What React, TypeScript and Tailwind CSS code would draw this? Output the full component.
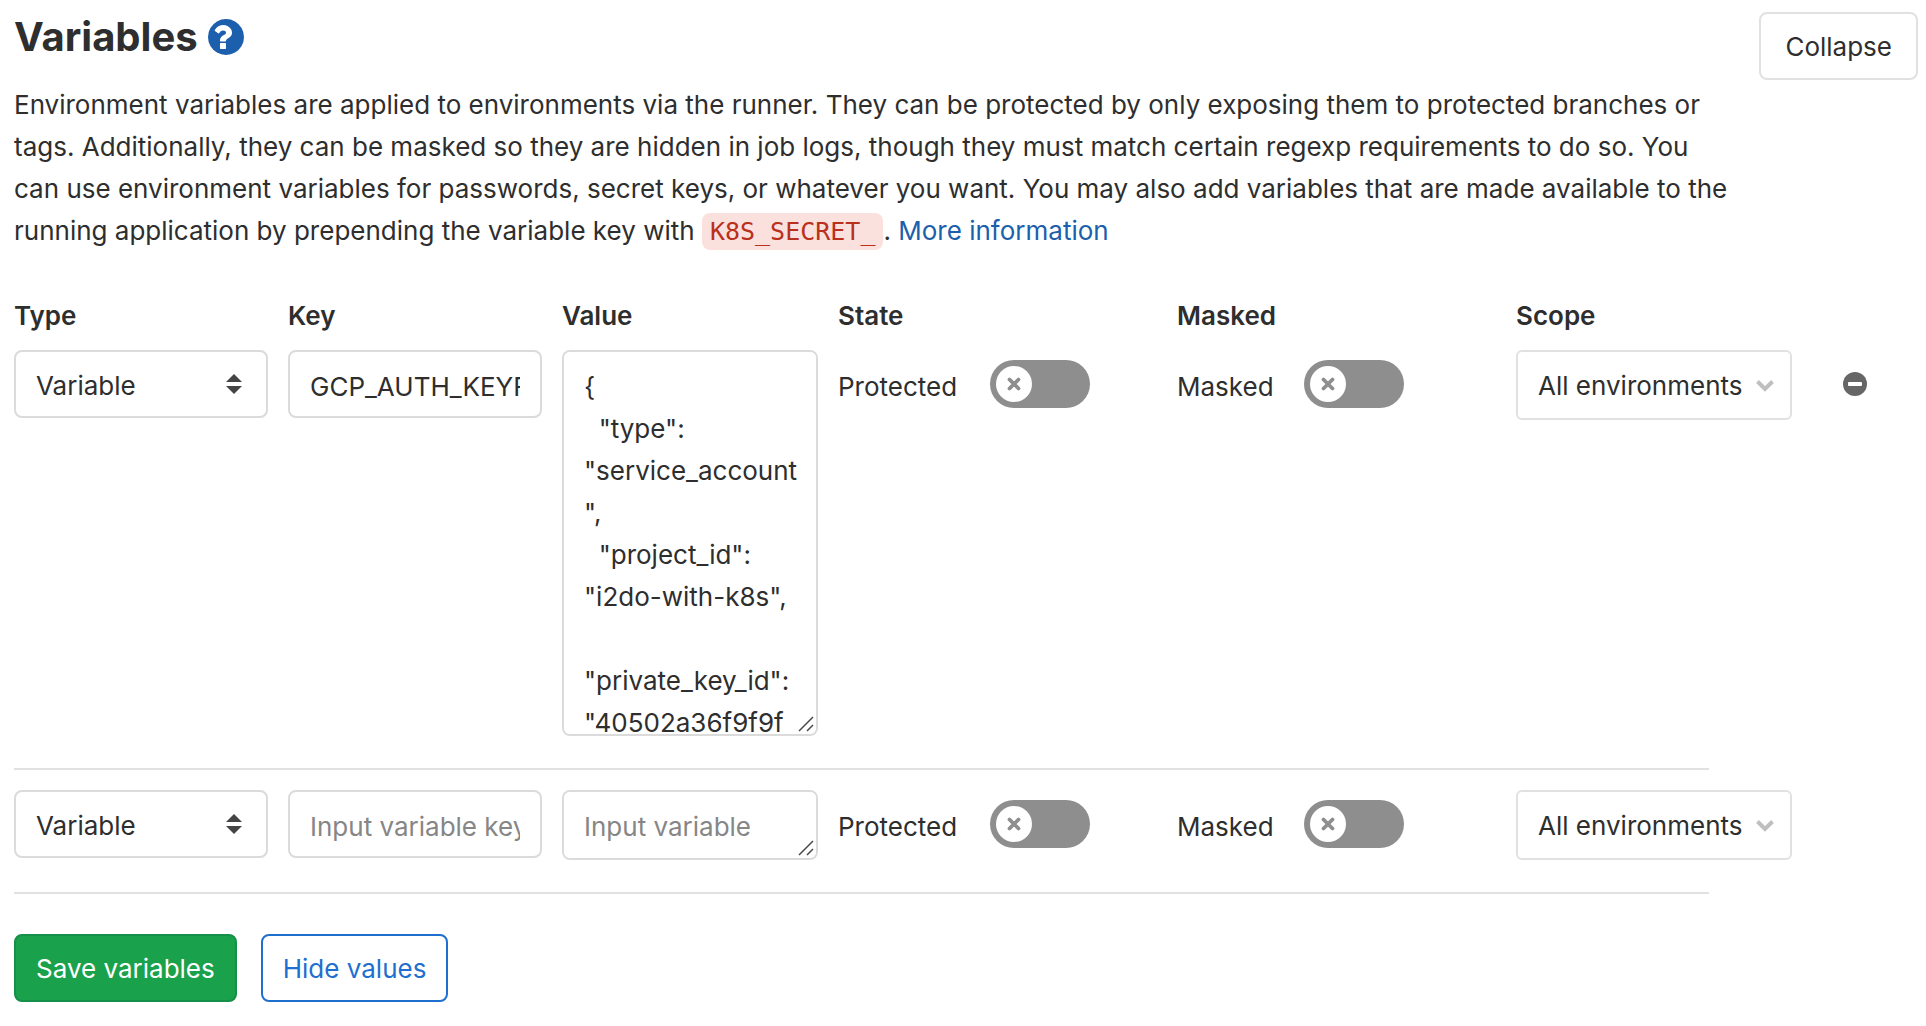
import React, { useId } from "react";

const SERVICE_ACCOUNT = `{
  "type": "service_account",
  "project_id": "i2do-with-k8s",
  "private_key_id": "40502a36f9f9f`;

const GRID =
  "grid grid-cols-[254fr_254fr_256fr_319fr_319fr_402fr] items-start gap-x-5";

const FIELD =
  "block w-full rounded-lg border-2 border-[#dbdbdb] bg-white pl-5 text-[#2e2e2e] placeholder:text-[#868686] placeholder:opacity-100";

function HelpIcon() {
  return (
    <svg viewBox="128 128 1536 1536" className="size-9" aria-hidden="true">
      <path
        fill="#1b5fad"
        d="M896 1376v-192q0-14-9-23t-23-9h-192q-14 0-23 9t-9 23v192q0 14 9 23t23 9h192q14 0 23-9t9-23zm256-672q0-88-55.500-163t-138.500-116-170-41q-243 0-371 213-15 24 8 42l132 100q7 6 19 6 16 0 25-12 53-68 86-92 34-24 86-24 48 0 85.500 26t37.500 59q0 38-20 61t-68 45q-63 28-115.500 86.500t-52.500 125.500v36q0 14 9 23t23 9h192q14 0 23-9t9-23q0-19 21.500-49.500t54.500-49.500q32-18 49-28.500t46-35 44.500-48 28-60.500 12.500-81zm512 192q0 209-103 385.500t-279.500 279.500-385.500 103-385.500-103-279.500-279.500-103-385.500 103-385.500 279.500-279.500 385.500-103 385.500 103 279.500 279.500 103 385.500z"
      />
    </svg>
  );
}

function Toggle({ label, pad }: { label: string; pad: string }) {
  const id = useId();
  return (
    <div className={`flex items-start ${pad}`}>
      <label htmlFor={id} className="pt-4">
        {label}
      </label>
      <div className="relative mt-[10px] ml-auto h-12 w-[100px] shrink-0">
        <input
          id={id}
          type="checkbox"
          role="switch"
          className="block h-12 w-[100px] cursor-pointer appearance-none rounded-full bg-[#8e8e8e]"
        />
        <span className="pointer-events-none absolute top-1.5 left-1.5 flex size-9 items-center justify-center rounded-full bg-white">
          <svg viewBox="0 0 14 14" className="size-3.5" aria-hidden="true">
            <path
              d="M2.500 2.500 L11.500 11.500 M11.500 2.500 L2.500 11.500"
              stroke="#8e8e8e"
              strokeWidth="3.800"
              strokeLinecap="round"
            />
          </svg>
        </span>
      </div>
    </div>
  );
}

function ValueBox({ value, height }: { value?: string; height: string }) {
  return (
    <div className="relative">
      <textarea
        aria-label="Value"
        defaultValue={value}
        placeholder="Input variable value"
        className={`${FIELD} ${height} resize-none py-[14px] pr-4 [scrollbar-width:none]`}
      />
      <svg
        viewBox="0 0 16 16"
        className="pointer-events-none absolute right-1 bottom-1 size-4"
        aria-hidden="true"
      >
        <path
          d="M1 15 L15 1 M9 15 L15 9"
          stroke="#4a4a4a"
          strokeWidth="1.500"
          fill="none"
        />
      </svg>
    </div>
  );
}

function VariableRow({
  name,
  value,
  valueHeight,
  removable,
}: {
  name?: string;
  value?: string;
  valueHeight: string;
  removable?: boolean;
}) {
  return (
    <div className={GRID}>
      <div className="relative">
        <select
          aria-label="Type"
          className={`${FIELD} h-[68px] appearance-none pt-1 pr-12`}
        >
          <option>Variable</option>
          <option>File</option>
        </select>
        <svg
          viewBox="0 0 16 20"
          className="pointer-events-none absolute top-6 right-[26px] h-5 w-4"
          aria-hidden="true"
        >
          <path d="M0 8 L8 0 L16 8 Z M0 12 L8 20 L16 12 Z" fill="#444" />
        </svg>
      </div>
      <input
        type="text"
        aria-label="Key"
        defaultValue={name}
        placeholder="Input variable key"
        className={`${FIELD} h-[68px] pt-1 pr-5`}
      />
      <ValueBox value={value} height={valueHeight} />
      <Toggle label="Protected" pad="pr-[67px]" />
      <Toggle label="Masked" pad="pr-[92px]" />
      <div className="flex items-start gap-[51px]">
        <div className="relative w-[276px]">
          <select
            aria-label="Scope"
            className="block h-[70px] w-full appearance-none rounded-md border-2 border-[#e1e1e1] bg-white pt-0.5 pr-10 pl-5 text-[#2e2e2e]"
          >
            <option>All environments</option>
          </select>
          <svg
            viewBox="0 0 18 12"
            className="pointer-events-none absolute top-[30px] right-[18px] h-3 w-[18px]"
            aria-hidden="true"
          >
            <path
              d="M1.500 1.500 L9 9 L16.500 1.500"
              fill="none"
              stroke="#bfbfbf"
              strokeWidth="4"
            />
          </svg>
        </div>
        {removable && (
          <button type="button" aria-label="Remove variable" className="mt-[22px]">
            <svg viewBox="0 0 24 24" className="size-6" aria-hidden="true">
              <circle cx="12" cy="12" r="12" fill="#666" />
              <rect x="5" y="10" width="14" height="4" rx="1" fill="#fff" />
            </svg>
          </button>
        )}
      </div>
    </div>
  );
}

export default function App() {
  return (
    <main className="bg-white pt-3 pr-2 pb-6 pl-[14px] font-['Inter','Liberation_Sans',sans-serif] text-[26px] leading-[42px] text-[#2e2e2e]">
      <header className="flex items-start gap-4">
        <div className="flex-1">
          <h1 className="flex items-center gap-2.5 text-[40px] leading-[50px] font-bold">
            Variables
            <a href="#help" aria-label="Help">
              <HelpIcon />
            </a>
          </h1>
          <p className="mt-[22px]">
            Environment variables are applied to environments via the runner. They can be
            protected by only exposing them to protected branches or tags. Additionally,
            they can be masked so they are hidden in job logs, though they must match
            certain regexp requirements to do so. You can&nbsp;use environment variables for
            passwords, secret keys, or whatever you want. You may also add variables that
            are made available to the running application by prepending the variable key
            with{" "}
            <code className="rounded-lg bg-[#fbe1de] px-2 py-1 font-['DejaVu_Sans_Mono',monospace] text-[25px] text-[#b9301c]">
              K8S_SECRET_
            </code>
            .{" "}
            <a href="#more" className="text-[#1b5fad]">
              More information
            </a>
          </p>
        </div>
        <button
          type="button"
          className="h-[68px] rounded-lg border-2 border-[#e1e1e1] px-6 pt-0.5"
        >
          Collapse
        </button>
      </header>

      <form onSubmit={(e) => e.preventDefault()}>
        <div className={`${GRID} mt-[42px] mb-[13px] font-semibold`}>
          <span>Type</span>
          <span>Key</span>
          <span>Value</span>
          <span>State</span>
          <span>Masked</span>
          <span>Scope</span>
        </div>
        <VariableRow
          name="GCP_AUTH_KEYFILE"
          value={SERVICE_ACCOUNT}
          valueHeight="h-[386px]"
          removable
        />
        <hr className="mt-8 mb-5 w-[89%] border-t-2 border-[#e1e1e1]" />
        <VariableRow valueHeight="h-[70px]" />
        <hr className="mt-8 mb-10 w-[89%] border-t-2 border-[#e1e1e1]" />
        <div className="flex gap-6">
          <button
            type="submit"
            className="h-[68px] rounded-lg border-2 border-[#168f48] bg-[#1aa14b] px-5 pt-0.5 text-white"
          >
            Save variables
          </button>
          <button
            type="button"
            className="h-[68px] rounded-lg border-2 border-[#1f6fd0] px-5 pt-0.5 text-[#1f6fd0]"
          >
            Hide values
          </button>
        </div>
      </form>
    </main>
  );
}
